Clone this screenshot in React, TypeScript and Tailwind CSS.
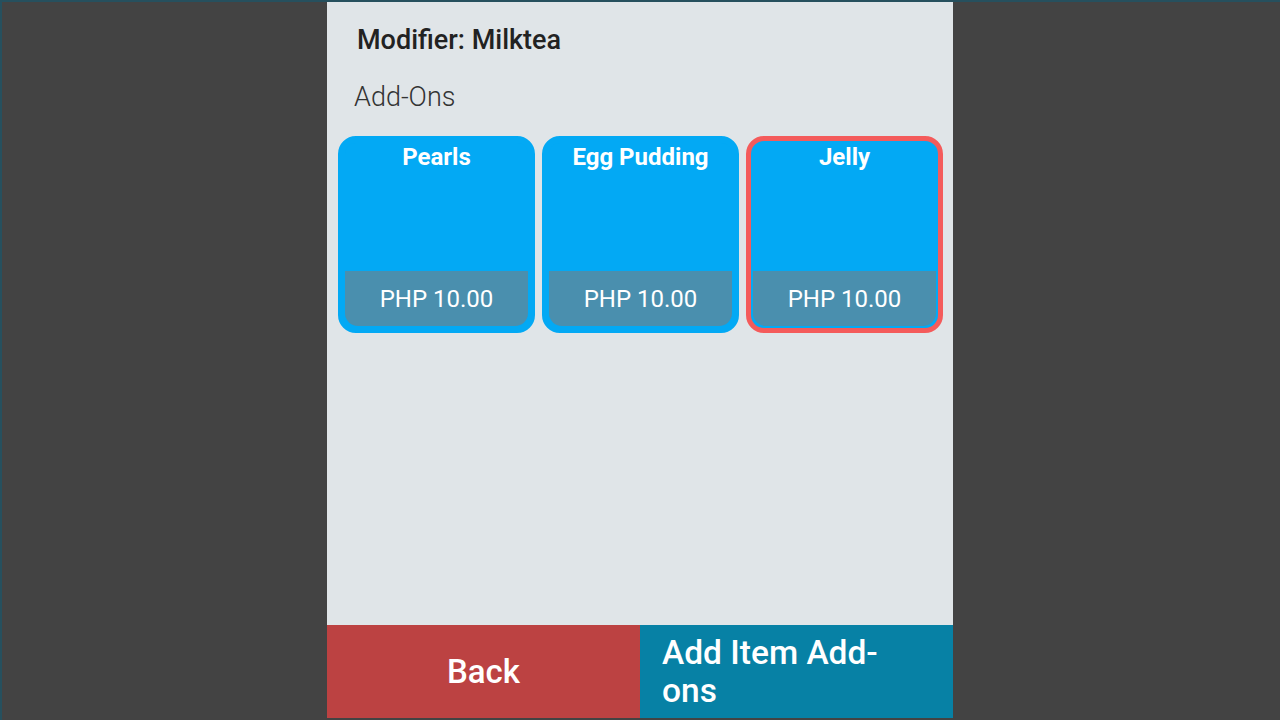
import React from "react";

const items = [
  { name: "Pearls", price: "PHP 10.00", selected: false },
  { name: "Egg Pudding", price: "PHP 10.00", selected: false },
  { name: "Jelly", price: "PHP 10.00", selected: true },
];

function Card({ name, price, selected }: { name: string; price: string; selected: boolean }) {
  const inner = (
    <div className="flex flex-col h-full">
      <div className="text-white font-bold text-[24px] leading-[28px] text-center">{name}</div>
      <div className="flex-1" />
      <div className="h-[55px] bg-[#4a8fae] rounded-b-[13px] flex items-center justify-center text-white text-[24px] leading-[28px]">
        {price}
      </div>
    </div>
  );
  if (selected) {
    return (
      <div className="w-[197px] h-[197px] rounded-[18px] border-[5px] border-[#f45b5b] bg-[#03a9f4] p-[2px]">
        {inner}
      </div>
    );
  }
  return (
    <div className="w-[197px] h-[197px] rounded-[18px] border-[7px] border-[#03a9f4] bg-[#03a9f4]">
      {inner}
    </div>
  );
}

export default function App() {
  return (
    <div
      className="w-full h-screen bg-[#434343] flex justify-center border-l-2 border-t-2 border-[#26505e] overflow-hidden"
      style={{ fontFamily: "Roboto, 'Liberation Sans', sans-serif" }}
    >
      <div className="w-[626px] h-[718px] bg-[#e0e5e8] flex flex-col border-t-[2px] border-[#c6cdd1] -mt-[2px] ml-[-2px]">
        <div className="pl-[30px] pt-[22px] text-[27px] leading-[32px] font-medium text-[#222222]">
          Modifier: Milktea
        </div>
        <div className="pl-[27px] pt-[25px] text-[27px] leading-[32px] font-light text-[#333333]">
          Add-Ons
        </div>
        <div className="pl-[11px] pt-[23px] flex gap-[7px]">
          {items.map((it) => (
            <Card key={it.name} {...it} />
          ))}
        </div>
        <div className="flex-1" />
        <div className="flex h-[93px]">
          <button className="w-[313px] h-full bg-[#bc4242] text-white text-[33px] font-medium flex items-center justify-center">
            Back
          </button>
          <button className="w-[313px] h-full bg-[#0781a5] text-white text-[33.5px] font-medium leading-[38px] flex items-center pl-[22px] text-left">
            <span className="w-[245px]">Add Item Add-ons</span>
          </button>
        </div>
      </div>
    </div>
  );
}
